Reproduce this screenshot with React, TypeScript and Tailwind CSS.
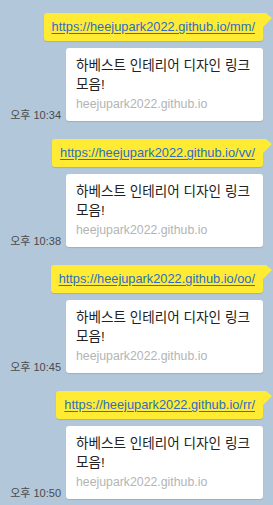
import React from "react";

const msgs = [
  { url: "https://heejupark2022.github.io/mm/", time: "오후 10:34" },
  { url: "https://heejupark2022.github.io/vv/", time: "오후 10:38" },
  { url: "https://heejupark2022.github.io/oo/", time: "오후 10:45" },
  { url: "https://heejupark2022.github.io/rr/", time: "오후 10:50" },
];

const font = {
  fontFamily: '"Liberation Sans", "Noto Sans CJK KR", sans-serif',
};

function Group({ url, time }: { url: string; time: string }) {
  return (
    <div className="flex flex-col items-end">
      <div className="relative rounded-[3px] rounded-tr-none bg-[#ffeb33] px-[8px] py-[5px] shadow-[0_1px_1px_rgba(0,0,0,0.12)]">
        <a className="block text-[12.8px] leading-[18px] text-[#2f6dc4] underline decoration-[#2f6dc4] underline-offset-[2px]">
          {url}
        </a>
        <svg
          className="absolute left-full top-0"
          width="10"
          height="15"
          viewBox="0 0 10 15"
        >
          <polygon points="0,0 3,0 9,5 0,14" fill="#ffeb33" />
        </svg>
      </div>
      <div className="mt-[7px] flex items-end gap-[5px]">
        <span className="text-[11px] leading-[12px] text-[#4a4a4a]">{time}</span>
        <div className="w-[197px] rounded-[3px] bg-white px-[10px] pb-[8px] pt-[8px] shadow-[0_1px_1px_rgba(0,0,0,0.12)]">
          <div className="break-keep text-[13.6px] leading-[19px] text-[#222]">
            하베스트 인테리어 디자인 링크 모음!
          </div>
          <div className="mt-[2px] text-[12.3px] leading-[17px] text-[#b4b4b4]">
            heejupark2022.github.io
          </div>
        </div>
      </div>
    </div>
  );
}

export default function App() {
  return (
    <div
      className="flex min-h-[505px] w-[273px] flex-col gap-[18px] bg-[#b2c7da] pb-[6px] pl-[5px] pr-[10px] pt-[13px]"
      style={font}
    >
      {msgs.map((m) => (
        <Group key={m.time} url={m.url} time={m.time} />
      ))}
    </div>
  );
}
